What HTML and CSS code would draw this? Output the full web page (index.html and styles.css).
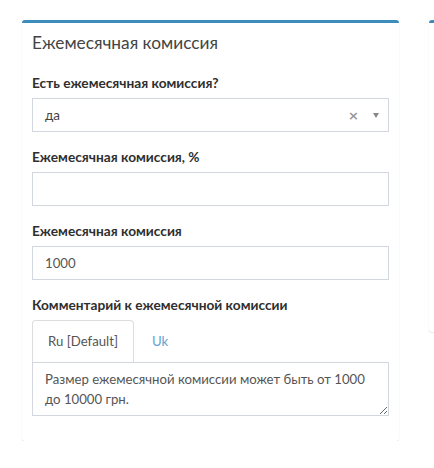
FILE: index.html
```html
<!DOCTYPE html>
<html lang="ru">
<head>
<meta charset="utf-8">
<link rel="stylesheet" href="styles.css">
</head>
<body>
<div class="page">
  <section class="box">
    <div class="box-header">
      <h3 class="box-title">Ежемесячная комиссия</h3>
    </div>
    <div class="box-body">
      <div class="form-group">
        <label class="lbl">Есть ежемесячная комиссия?</label>
        <div class="select">
          <span class="select-value">да</span>
          <span class="select-clear">×</span>
          <span class="select-arrow"></span>
        </div>
      </div>
      <div class="form-group">
        <label class="lbl">Ежемесячная комиссия, %</label>
        <input class="form-control" type="text" value="">
      </div>
      <div class="form-group">
        <label class="lbl">Ежемесячная комиссия</label>
        <input class="form-control" type="text" value="1000">
      </div>
      <div class="form-group">
        <label class="lbl">Комментарий к ежемесячной комиссии</label>
        <ul class="tabs">
          <li class="tab active">Ru [Default]</li>
          <li class="tab">Uk</li>
        </ul>
        <textarea class="form-control area" rows="2">Размер ежемесячной комиссии может быть от 1000 до 10000 грн.</textarea>
      </div>
    </div>
  </section>
  <section class="box box-side"></section>
</div>
</body>
</html>
```
FILE: styles.css
```css
html, body {
  margin: 0;
  padding: 0;
  background: #fff;
  overflow: hidden;
}

body {
  font-family: "Lato", "Noto Sans", sans-serif;
  color: #333;
}

.page {
  display: flex;
  gap: 30px;
  padding: 20px 0 0 22px;
  align-items: flex-start;
}

.box {
  width: 377px;
  flex: none;
  background: #fff;
  border-top: 3px solid #3c8dbc;
  border-radius: 3px;
  box-shadow: 0 0 1px rgba(0, 0, 0, 0.12), 0 1px 1px rgba(0, 0, 0, 0.08);
}

.box-side {
  flex: 1 1 auto;
  width: auto;
  min-width: 0;
  height: 309px;
  border-radius: 3px 0 0 3px;
}

.box-header {
  padding: 10px;
}

.box-title {
  margin: 0;
  font-size: 17.3px;
  line-height: 20px;
  font-weight: 400;
  color: #444;
}

.box-body {
  padding: 10px;
}

.form-group {
  margin-bottom: 15px;
}

.lbl {
  display: block;
  font-size: 13.7px;
  font-weight: 700;
  line-height: 20px;
  margin-bottom: 5px;
  color: #2f2f2f;
}

.form-control {
  display: block;
  box-sizing: border-box;
  width: 100%;
  height: 34px;
  margin: 0;
  padding: 6px 12px;
  border: 1px solid #d2d6de;
  border-radius: 0;
  font-family: "Lato", "Noto Sans", sans-serif;
  font-size: 13.2px;
  line-height: 20px;
  color: #555;
  background: #fff;
  outline: none;
}

.select {
  display: flex;
  align-items: center;
  box-sizing: border-box;
  height: 34px;
  padding: 0 8px 0 12px;
  border: 1px solid #d2d6de;
  font-size: 13.5px;
  color: #444;
}

.select-value {
  flex: 1;
}

.select-clear {
  font-family: "DejaVu Sans", sans-serif;
  font-weight: 700;
  font-size: 13px;
  color: #999;
  margin-right: 14px;
}

.select-arrow {
  width: 0;
  height: 0;
  margin-right: 1px;
  border-style: solid;
  border-width: 5px 3.5px 0 3.5px;
  border-color: #888 transparent transparent transparent;
}

.tabs {
  display: flex;
  list-style: none;
  margin: 0;
  padding: 0;
}

.tab {
  margin-right: 2px;
  padding: 10px 15px 11px;
  border: 1px solid transparent;
  border-bottom: 0;
  border-radius: 4px 4px 0 0;
  font-size: 13.2px;
  line-height: 20px;
  color: #5fa2d6;
}

.tab.active {
  border-color: #ddd;
  color: #555;
}

.area {
  height: 54px;
  resize: vertical;
}
```
